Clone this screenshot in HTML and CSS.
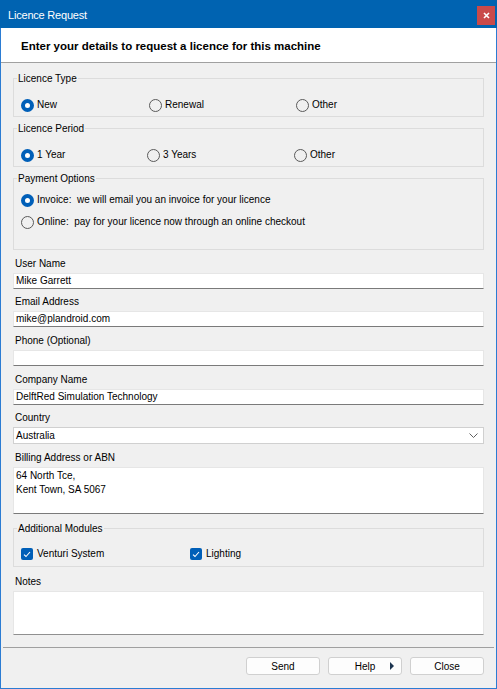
FILE: index.html
```html
<!DOCTYPE html>
<html lang="en">
<head>
<meta charset="utf-8">
<title>Licence Request</title>
<link rel="stylesheet" href="styles.css">
</head>
<body>
<div class="window">
  <div class="titlebar">
    <span class="title">Licence Request</span>
    <span class="close"><svg width="7" height="7" viewBox="0 0 7 7"><path d="M1 1 L6 6 M6 1 L1 6" stroke="#fff" stroke-width="1.6"/></svg></span>
  </div>
  <div class="header">Enter your details to request a licence for this machine</div>
  <div class="content">
    <fieldset class="group g-type">
      <legend>Licence Type</legend>
      <div class="radios cols-type">
        <span class="opt"><span class="radio on"></span>New</span>
        <span class="opt"><span class="radio"></span>Renewal</span>
        <span class="opt"><span class="radio"></span>Other</span>
      </div>
    </fieldset>
    <fieldset class="group g-period">
      <legend>Licence Period</legend>
      <div class="radios cols-period">
        <span class="opt"><span class="radio on"></span>1 Year</span>
        <span class="opt"><span class="radio"></span>3 Years</span>
        <span class="opt"><span class="radio"></span>Other</span>
      </div>
    </fieldset>
    <fieldset class="group g-pay">
      <legend>Payment Options</legend>
      <div class="stack">
        <span class="opt"><span class="radio on"></span>Invoice:&nbsp; we will email you an invoice for your licence</span>
        <span class="opt"><span class="radio"></span>Online:&nbsp; pay for your licence now through an online checkout</span>
      </div>
    </fieldset>

    <div class="field">
      <div class="label">User Name</div>
      <div class="input">Mike Garrett</div>
    </div>
    <div class="field">
      <div class="label">Email Address</div>
      <div class="input">mike@plandroid.com</div>
    </div>
    <div class="field">
      <div class="label">Phone (Optional)</div>
      <div class="input"></div>
    </div>
    <div class="field">
      <div class="label">Company Name</div>
      <div class="input">DelftRed Simulation Technology</div>
    </div>
    <div class="field">
      <div class="label">Country</div>
      <div class="combo"><span>Australia</span>
        <svg width="9" height="6" viewBox="0 0 9 6"><path d="M0.5 0.5 L4.5 4.5 L8.5 0.5" fill="none" stroke="#606060" stroke-width="1"/></svg>
      </div>
    </div>
    <div class="field">
      <div class="label">Billing Address or ABN</div>
      <div class="textarea billing">64 North Tce,<br>Kent Town, SA 5067</div>
    </div>

    <fieldset class="group g-mod">
      <legend>Additional Modules</legend>
      <div class="radios cols-mod">
        <span class="opt"><span class="check"><svg width="8" height="7" viewBox="0 0 8 7"><path d="M1 3.6 L3 5.5 L7 1" fill="none" stroke="#fff" stroke-width="1.1"/></svg></span>Venturi System</span>
        <span class="opt"><span class="check"><svg width="8" height="7" viewBox="0 0 8 7"><path d="M1 3.6 L3 5.5 L7 1" fill="none" stroke="#fff" stroke-width="1.1"/></svg></span>Lighting</span>
      </div>
    </fieldset>

    <div class="field notes-field">
      <div class="label">Notes</div>
      <div class="textarea notes"></div>
    </div>
  </div>
  <div class="footer">
    <button class="btn">Send</button>
    <button class="btn help">Help<span class="tri"></span></button>
    <button class="btn">Close</button>
  </div>
</div>
</body>
</html>
```
FILE: styles.css
```css
* { box-sizing: border-box; }
html, body { margin: 0; padding: 0; }
body {
  width: 497px;
  height: 689px;
  font-family: "Liberation Sans", Arial, sans-serif;
  font-size: 10px;
  color: #000;
  background: #f0f0f0;
}
.window {
  width: 497px;
  height: 689px;
  border: 1px solid #2b7cd3;
  border-top: 0;
  display: flex;
  flex-direction: column;
  background: #f0f0f0;
}
.titlebar {
  height: 28px;
  margin: 0 -1px;
  background: #0063b1;
  color: #fff;
  display: flex;
  justify-content: space-between;
  align-items: flex-start;
  padding-left: 8px;
}
.title {
  font-size: 11px;
  letter-spacing: -0.2px;
  line-height: 14px;
  margin-top: 8px;
}
.close {
  width: 18px;
  height: 19px;
  margin-top: 6px;
  margin-right: 2px;
  background: #c94a4a;
  display: flex;
  align-items: center;
  justify-content: center;
}
.header {
  height: 35px;
  background: #fff;
  border-bottom: 1px solid #a0a0a0;
  padding-left: 20px;
  padding-top: 11px;
  font-weight: bold;
  font-size: 11.5px;
  line-height: 14px;
}
.content {
  flex: 1;
  padding: 0 12px 0 12px;
}
.group {
  margin: 0;
  border: 1px solid #dcdcdc;
  padding: 0 4px 3px 7px;
}
.group legend {
  padding: 1px 1px 0;
  margin-left: -4px;
  line-height: 14px;
  height: 15px;
}
.g-type { margin-top: 8px; padding-top: 11px; padding-bottom: 3px; }
.g-period { margin-top: 4px; padding-top: 11px; padding-bottom: 3px; }
.g-pay { margin-top: 4px; padding-top: 6px; padding-bottom: 19px; }
.g-mod { margin-top: 7px; padding-top: 10px; padding-bottom: 4px; }
.radios { display: grid; }
.cols-type { grid-template-columns: 128px 147px 1fr; }
.cols-period { grid-template-columns: 126px 147px 1fr; }
.cols-mod { grid-template-columns: 169px 1fr; }
.stack { display: flex; flex-direction: column; gap: 6px; }
.opt {
  display: flex;
  align-items: center;
  height: 16px;
  line-height: 14px;
  white-space: nowrap;
}
.radio {
  width: 13px;
  height: 13px;
  border-radius: 50%;
  border: 1px solid #5a5a5a;
  margin-right: 3px;
  flex: none;
  background: transparent;
}
.radio.on {
  border: 4px solid #005fb8;
  background: #fff;
}
.check {
  width: 12px;
  height: 12px;
  border-radius: 2px;
  background: #005fb8;
  margin-right: 4px;
  flex: none;
  display: flex;
  align-items: center;
  justify-content: center;
}
.field { margin-top: 6.7px; }
.label {
  height: 14px;
  line-height: 14px;
  padding-left: 2px;
  margin-bottom: 2px;
}
.input, .combo, .textarea {
  background: #fff;
  border: 1px solid #e6e6e6;
  border-bottom: 1px solid #7a7a7a;
  padding-left: 2px;
  line-height: 14px;
}
.input { height: 16px; line-height: 14px; }
.combo {
  height: 17px;
  line-height: 15px;
  display: flex;
  justify-content: space-between;
  align-items: center;
  padding-right: 5px;
  border: 1px solid #d0d0d0;
}
.textarea.billing { height: 47px; padding-top: 1px; }
.notes-field { margin-top: 8px; }
.textarea.notes { height: 44px; border-bottom-color: #909090; }
.footer {
  height: 41px;
  margin: 0 2px;
  border-top: 1px solid #a0a0a0;
  display: flex;
  justify-content: flex-end;
  align-items: flex-start;
  gap: 8px;
  padding-top: 9px;
  padding-right: 10px;
}
.btn {
  width: 74px;
  height: 18px;
  font-family: "Liberation Sans", Arial, sans-serif;
  font-size: 10px;
  color: #000;
  background: #fdfdfd;
  border: 1px solid #d0d0d0;
  border-radius: 3px;
  padding: 0;
  position: relative;
}
.tri {
  position: absolute;
  right: 7px;
  top: 4px;
  width: 0;
  height: 0;
  border-top: 4px solid transparent;
  border-bottom: 4px solid transparent;
  border-left: 4px solid #1c3550;
}
```
